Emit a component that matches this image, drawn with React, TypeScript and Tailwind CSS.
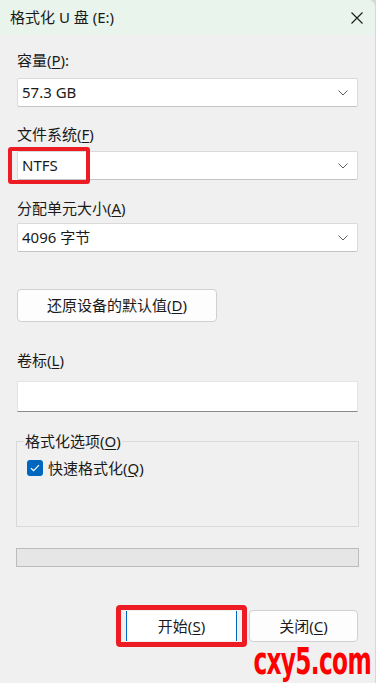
import React from "react";

const font = { fontFamily: '"Noto Sans", "Noto Sans CJK SC", sans-serif' };

const Chevron = () => (
    <svg width="10" height="6" viewBox="0 0 10 6" className="text-[#5c5c5c]">
        <path d="M0.5 0.5 L5 5 L9.5 0.5" fill="none" stroke="currentColor" strokeWidth="1" />
    </svg>
);

const Combo = ({ value, className = "" }: { value: string; className?: string }) => (
    <div className={"h-[29px] bg-white border border-[#dadada] border-b-[#c4c4c4] rounded-[2px] flex items-center justify-between pl-[4px] pr-[9px] " + className}>
        <span className="text-[15px] leading-none text-[#1a1a1a]">{value}</span>
        <Chevron />
    </div>
);

const U = ({ c }: { c: string }) => <span className="underline underline-offset-[2px]">{c}</span>;

export default function App() {
    return (
        <div className="w-[376px] h-[683px] bg-[#d8d8d8]" style={font}>
            <div className="relative w-[375px] h-[683px] bg-[#f0f0f0] rounded-tr-[7px] overflow-hidden text-[#1a1a1a]">
                <div className="h-[35px] bg-[#e8f4ec] flex items-center justify-between pl-[10px] pr-[12px]">
                    <span className="text-[15px] leading-none">格式化 U 盘 (E:)</span>
                    <svg width="12" height="12" viewBox="0 0 12 12">
                        <path d="M0.5 0.5 L11.5 11.5 M11.5 0.5 L0.5 11.5" stroke="#1a1a1a" strokeWidth="1.1" />
                    </svg>
                </div>

                <div className="px-[17px] flex flex-col">
                    <div className="mt-[15px] text-[15px] leading-[20px]">容量(<U c="P" />):</div>
                    <Combo value="57.3 GB" className="mt-[8px]" />

                    <div className="mt-[17px] text-[15px] leading-[20px]">文件系统(<U c="F" />)</div>
                    <div className="relative mt-[7px]">
                        <Combo value="NTFS" />
                        <div className="absolute left-[-9px] top-[-4px] w-[82px] h-[37px] border-[4px] border-[#ed1c24] rounded-[3px]" />
                    </div>

                    <div className="mt-[18px] text-[15px] leading-[20px]">分配单元大小(<U c="A" />)</div>
                    <Combo value="4096 字节" className="mt-[5px]" />

                    <button className="mt-[37px] w-[200px] h-[33px] bg-[#fdfdfd] border border-[#d0d0d0] rounded-[4px] text-[15px] leading-none">
                        还原设备的默认值(<U c="D" />)
                    </button>

                    <div className="mt-[28px] text-[15px] leading-[20px]">卷标(<U c="L" />)</div>
                    <div className="mt-[11px] h-[31px] bg-white border border-[#e4e4e4] border-b-[#8a8a8a]" />

                    <fieldset className="mt-[19px] -mx-[1px] h-[96px] border border-[#d9d9d9]">
                        <legend className="ml-[7px] px-[1px] text-[15px] leading-[20px]">格式化选项(<U c="O" />)</legend>
                        <div className="mt-[7px] ml-[10px] flex items-center gap-[5px]">
                            <div className="w-[16px] h-[16px] rounded-[3px] bg-[#0067c0] flex items-center justify-center">
                                <svg width="10" height="8" viewBox="0 0 10 8">
                                    <path d="M1 4.2 L3.6 6.6 L9 1.2" fill="none" stroke="white" strokeWidth="1.2" />
                                </svg>
                            </div>
                            <span className="text-[15px] leading-[20px]">快速格式化(<U c="Q" />)</span>
                        </div>
                    </fieldset>

                    <div className="mt-[21px] -mx-[1px] h-[19px] bg-[#e6e6e6] border border-[#bcbcbc]" />

                    <div className="mt-[44px] flex justify-end gap-[12px]">
                        <div className="relative">
                            <button className="w-[111px] h-[30px] bg-white border-x border-[#0067c0] text-[15px] leading-none">
                                开始(<U c="S" />)
                            </button>
                            <div className="absolute left-[-10px] top-[-6px] w-[131px] h-[42px] border-[5px] border-[#ed1c24] rounded-[4px]" />
                        </div>
                        <button className="w-[109px] h-[32px] -mt-[1px] bg-[#fdfdfd] border border-[#d0d0d0] rounded-[4px] text-[15px] leading-none">
                            关闭(<U c="C" />)
                        </button>
                    </div>
                </div>

                <div
                    className="absolute right-[4px] bottom-[3px] origin-right scale-x-[0.7] text-[37px] leading-[36px] font-bold text-[#ff0000] tracking-[-1px]"
                    style={{ fontFamily: '"DejaVu Sans Condensed", "DejaVu Sans", sans-serif' }}
                >
                    cxy5.com
                </div>
            </div>
        </div>
    );
}
